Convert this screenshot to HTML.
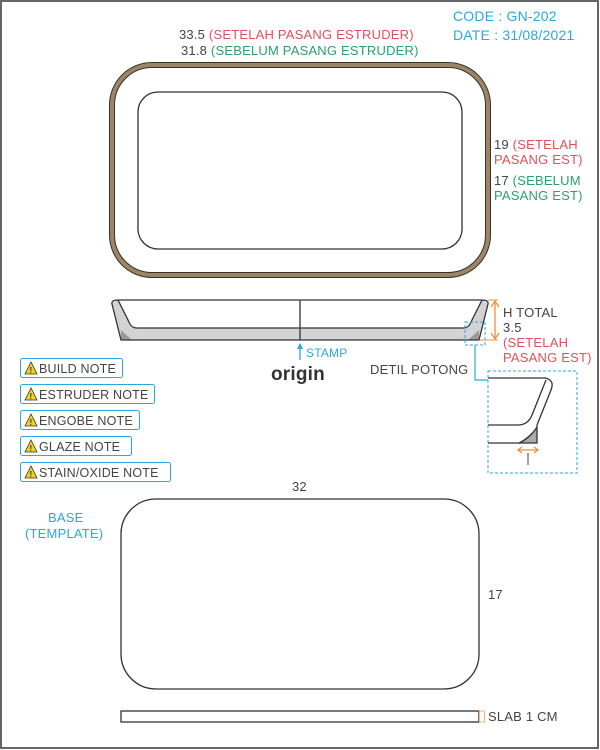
<!DOCTYPE html>
<html><head><meta charset="utf-8"><style>
html,body{margin:0;padding:0;background:#fff}
svg{display:block}
text{font-family:"Liberation Sans",sans-serif;letter-spacing:0.2px}
</style></head><body>
<svg width="600" height="750" viewBox="0 0 600 750" xmlns="http://www.w3.org/2000/svg">
<rect x="1" y="1" width="597" height="747" fill="#fff" stroke="#666" stroke-width="2"/>
<text x="453" y="21" font-family="Liberation Serif" font-size="14" fill="#2aa8dd">CODE : GN-202</text>
<text x="453" y="40" font-family="Liberation Serif" font-size="14" fill="#2aa8dd">DATE : 31/08/2021</text>
<text x="179" y="39" font-size="13" fill="#444">33.5 <tspan fill="#e0505a">(SETELAH PASANG ESTRUDER)</tspan></text>
<text x="181" y="55" font-size="13" fill="#444">31.8 <tspan fill="#2aa070">(SEBELUM PASANG ESTRUDER)</tspan></text>
<rect x="112" y="65" width="376" height="210" rx="40" fill="none" stroke="#3a3128" stroke-width="6"/>
<rect x="112" y="65" width="376" height="210" rx="40" fill="none" stroke="#9b8566" stroke-width="4"/>
<rect x="138" y="92" width="324" height="157" rx="20" fill="none" stroke="#333" stroke-width="1.3"/>
<text x="494" y="149" font-size="13" fill="#444">19 <tspan fill="#e0505a">(SETELAH</tspan></text>
<text x="494" y="164" font-size="13" fill="#e0505a">PASANG EST)</text>
<text x="494" y="185" font-size="13" fill="#444">17 <tspan fill="#2aa070">(SEBELUM</tspan></text>
<text x="494" y="200" font-size="13" fill="#2aa070">PASANG EST)</text>
<polygon points="112,302 121,340 479,340 488,302 482,300 468,328 132,328 118,300" fill="#d3d3d3"/>
<polygon points="121,330 121,340 132,340" fill="#999"/>
<polygon points="479,330 479,340 468,340" fill="#999"/>
<line x1="118" y1="300" x2="482" y2="300" stroke="#333" stroke-width="1.3"/>
<path d="M118,300 Q111,300 112,304 L121,340 L479,340 L488,304 Q489,300 482,300" fill="none" stroke="#333" stroke-width="1.3"/>
<path d="M118,300 L130,324 Q132,328 137,328 L463,328 Q468,328 470,324 L482,300" fill="none" stroke="#333" stroke-width="1.3"/>
<line x1="300" y1="300" x2="300" y2="340" stroke="#333" stroke-width="1.3"/>
<line x1="495" y1="301" x2="495" y2="339" stroke="#f0903a" stroke-width="1.3"/>
<path d="M491,307 L495,301 L499,307 M491,333 L495,339 L499,333" fill="none" stroke="#f0903a" stroke-width="1.3"/>
<line x1="488" y1="300" x2="498" y2="300" stroke="#f0903a"/><line x1="480" y1="340" x2="498" y2="340" stroke="#f0903a"/>
<text x="503" y="317" font-size="13" fill="#444">H TOTAL</text>
<text x="503" y="332" font-size="13" fill="#444">3.5</text>
<text x="503" y="347" font-size="13" fill="#e0505a">(SETELAH</text>
<text x="503" y="362" font-size="13" fill="#e0505a">PASANG EST)</text>
<line x1="300" y1="344" x2="300" y2="360" stroke="#2aa8dd" stroke-width="1.3"/>
<path d="M297,349 L300,343 L303,349 Z" fill="#2aa8dd"/>
<text x="306" y="357" font-size="12" fill="#2aa8dd">STAMP</text>
<text x="271" y="380" font-family="Liberation Serif" font-weight="bold" font-size="19" fill="#333" letter-spacing="0">origin</text>
<text x="370" y="374" font-size="13" fill="#444">DETIL POTONG</text>
<rect x="465" y="322" width="20" height="23" fill="none" stroke="#2aa8dd" stroke-dasharray="3,2"/>
<path d="M475,345 L475,380 L488,380" fill="none" stroke="#2aa8dd" stroke-width="1.2"/>
<rect x="488" y="371" width="89" height="102" fill="none" stroke="#2aa8dd" stroke-dasharray="3,2"/>
<polygon points="519,443 537,443 537,428 528,436" fill="#aaa"/>
<path d="M488,378 L545,378 Q555,380 551,390 L537,425 M488,425 L518,425 Q528,425 532,415 L546,380" fill="none" stroke="#333" stroke-width="1.3"/>
<path d="M488,443 L537,443 L537,425 M519,443 Q530,438 537,427" fill="none" stroke="#333" stroke-width="1.3"/>
<line x1="518" y1="450" x2="538" y2="450" stroke="#f0903a" stroke-width="1.3"/>
<path d="M522,447 L518,450 L522,453 M534,447 L538,450 L534,453" fill="none" stroke="#f0903a" stroke-width="1.3"/>
<line x1="528" y1="453" x2="528" y2="465" stroke="#444"/>
<g font-size="12.5" fill="#444" letter-spacing="0">
<rect x="20.5" y="358.5" width="102" height="19" rx="2" fill="none" stroke="#2aa8dd"/>
<text x="39" y="373">BUILD NOTE</text>
<rect x="20.5" y="384.5" width="134" height="19" rx="2" fill="none" stroke="#2aa8dd"/>
<text x="39" y="399">ESTRUDER NOTE</text>
<rect x="20.5" y="410.5" width="119" height="19" rx="2" fill="none" stroke="#2aa8dd"/>
<text x="39" y="425">ENGOBE NOTE</text>
<rect x="20.5" y="436.5" width="111" height="19" rx="2" fill="none" stroke="#2aa8dd"/>
<text x="39" y="451">GLAZE NOTE</text>
<rect x="20.5" y="462.5" width="150" height="19" rx="2" fill="none" stroke="#2aa8dd"/>
<text x="39" y="477">STAIN/OXIDE NOTE</text>
</g>
<g fill="#f2d31c" stroke="#333" stroke-width="0.8">
<polygon points="31,362 25,374 37,374"/><polygon points="31,388 25,400 37,400"/><polygon points="31,414 25,426 37,426"/><polygon points="31,440 25,452 37,452"/><polygon points="31,466 25,478 37,478"/>
</g>
<g font-size="8" font-weight="bold" fill="#333"><text x="29.5" y="373">!</text><text x="29.5" y="399">!</text><text x="29.5" y="425">!</text><text x="29.5" y="451">!</text><text x="29.5" y="477">!</text></g>
<text x="292" y="491" font-size="13" fill="#444">32</text>
<text x="48" y="522" font-size="13" fill="#2aa8dd">BASE</text>
<text x="25" y="538" font-size="13" fill="#2aa8dd">(TEMPLATE)</text>
<rect x="121" y="499" width="358" height="190" rx="35" fill="none" stroke="#333" stroke-width="1.3"/>
<text x="488" y="599" font-size="13" fill="#444">17</text>
<rect x="121" y="711" width="358" height="11" fill="none" stroke="#333" stroke-width="1.3"/>
<rect x="479.5" y="711" width="5" height="11" fill="none" stroke="#f0b080"/>
<text x="488" y="721" font-size="13" fill="#444">SLAB 1 CM</text>
</svg>
</body></html>
